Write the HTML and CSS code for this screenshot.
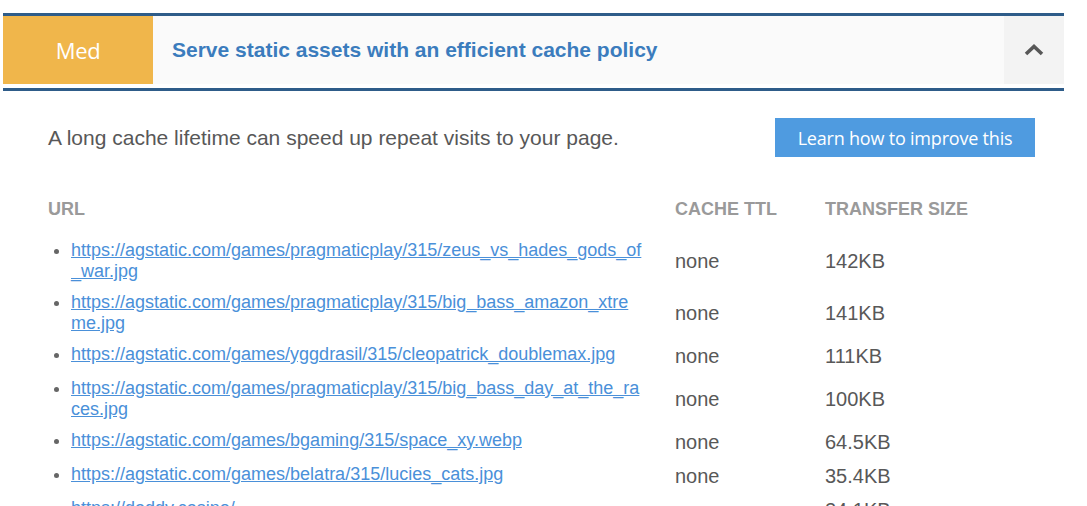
FILE: index.html
```html
<!DOCTYPE html>
<html lang="en">
<head>
<meta charset="utf-8">
<title>Audit</title>
<link rel="stylesheet" href="styles.css">
</head>
<body>
<div class="audit">
  <div class="audit-frame">
    <div class="audit-head">
      <div class="badge">Med</div>
      <div class="title">Serve static assets with an efficient cache policy</div>
      <div class="toggle">
        <svg width="20" height="12" viewBox="0 0 20 12"><polyline points="2,10 10,2.5 18,10" fill="none" stroke="#575757" stroke-width="3.6"/></svg>
      </div>
    </div>
  </div>
  <div class="audit-body">
    <div class="intro">
      <p class="desc">A long cache lifetime can speed up repeat visits to your page.</p>
      <a class="btn" href="#">Learn how to improve this</a>
    </div>
    <table class="res">
      <colgroup><col class="c-url"><col class="c-ttl"><col class="c-size"></colgroup>
      <thead>
        <tr><th>URL</th><th>Cache TTL</th><th>Transfer Size</th></tr>
      </thead>
      <tbody>
        <tr><td class="url"><ul><li><a href="#">https://agstatic.com/games/pragmaticplay/315/zeus_vs_hades_gods_of_war.jpg</a></li></ul></td><td>none</td><td>142KB</td></tr>
        <tr><td class="url"><ul><li><a href="#">https://agstatic.com/games/pragmaticplay/315/big_bass_amazon_xtreme.jpg</a></li></ul></td><td>none</td><td>141KB</td></tr>
        <tr><td class="url"><ul><li><a href="#">https://agstatic.com/games/yggdrasil/315/cleopatrick_doublemax.jpg</a></li></ul></td><td>none</td><td>111KB</td></tr>
        <tr><td class="url"><ul><li><a href="#">https://agstatic.com/games/pragmaticplay/315/big_bass_day_at_the_races.jpg</a></li></ul></td><td>none</td><td>100KB</td></tr>
        <tr><td class="url"><ul><li><a href="#">https://agstatic.com/games/bgaming/315/space_xy.webp</a></li></ul></td><td>none</td><td>64.5KB</td></tr>
        <tr><td class="url"><ul><li><a href="#">https://agstatic.com/games/belatra/315/lucies_cats.jpg</a></li></ul></td><td>none</td><td>35.4KB</td></tr>
        <tr><td class="url"><ul><li><a href="#">https://daddy.casino/</a></li></ul></td><td>none</td><td>24.1KB</td></tr>
      </tbody>
    </table>
  </div>
</div>
</body>
</html>
```
FILE: styles.css
```css
html, body {
  margin: 0;
  padding: 0;
  background: #ffffff;
}
body {
  font-family: "Liberation Sans", Arial, sans-serif;
  color: #555555;
}
.audit {
  margin: 13px 0 0 3px;
  width: 1061px;
}
.audit-frame {
  border-top: 3px solid #2e5c89;
  border-bottom: 3px solid #2e5c89;
  padding-bottom: 4px;
}
.audit-head {
  display: flex;
  height: 68px;
  background: #fafafa;
}
.badge {
  width: 150px;
  background: #f0b64b;
  color: #ffffff;
  display: flex;
  align-items: center;
  justify-content: center;
  font-family: "Open Sans", sans-serif;
  font-size: 22px;
  letter-spacing: -0.3px;
}
.title {
  flex: 1;
  display: flex;
  align-items: center;
  padding-left: 19px;
  color: #3b7cbd;
  font-weight: bold;
  font-size: 21px;
}
.toggle {
  width: 60px;
  background: #f3f3f3;
  display: flex;
  align-items: center;
  justify-content: center;
}
.audit-body {
  padding: 27px 29px 0 45px;
}
.intro {
  display: flex;
  align-items: center;
  justify-content: space-between;
}
.desc {
  margin: 0;
  font-size: 21px;
  color: #585858;
}
.btn {
  width: 260px;
  height: 39px;
  background: #4f9be0;
  color: #ffffff;
  text-decoration: none;
  display: flex;
  align-items: center;
  justify-content: center;
  font-family: "Open Sans", sans-serif;
  font-size: 18px;
  letter-spacing: -0.2px;
}
.res {
  margin-top: 42px;
  width: 986px;
  table-layout: fixed;
  border-collapse: collapse;
}
.c-url { width: 627px; }
.c-ttl { width: 150px; }
.c-size { width: 209px; }
.res th {
  text-align: left;
  font-size: 18px;
  font-weight: bold;
  text-transform: uppercase;
  color: #9a9a9a;
  padding: 0 0 15px 0;
}
.res td {
  padding: 5px 0;
  vertical-align: middle;
  font-size: 20px;
  line-height: 24px;
  color: #585858;
}
.res td.url {
  padding-right: 33px;
  vertical-align: top;
}
.res ul {
  margin: 0;
  padding-left: 23px;
}
.res li {
  font-size: 18px;
  line-height: 21px;
  color: #666666;
}
.res a {
  color: #4a90d9;
  text-decoration: underline;
  word-break: break-all;
}
```
